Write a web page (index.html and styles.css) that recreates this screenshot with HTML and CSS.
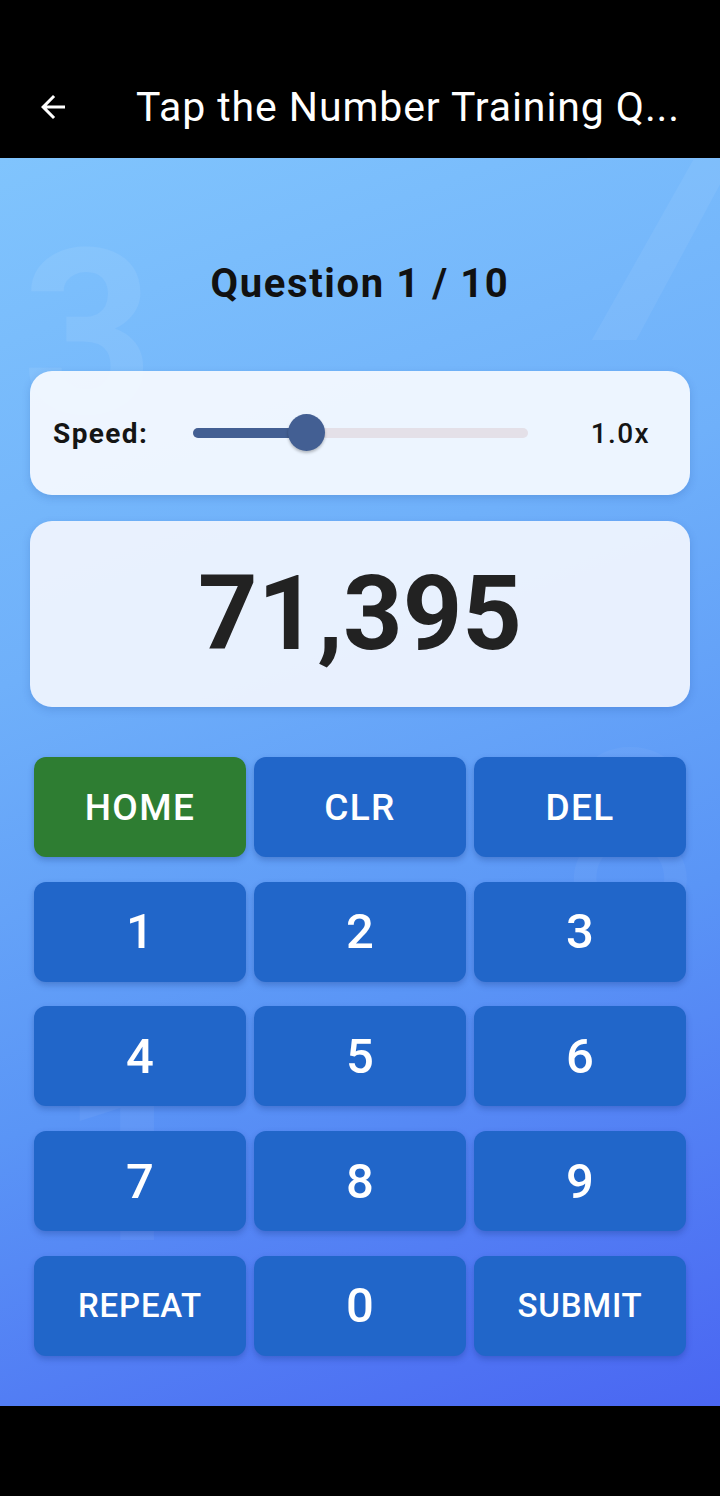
FILE: index.html
```html
<!DOCTYPE html>
<html lang="en">
<head>
<meta charset="utf-8">
<title>Tap the Number Training Quiz</title>
<link rel="stylesheet" href="styles.css">
</head>
<body>
<header class="topbar">
  <div class="appbar">
    <svg class="back" viewBox="0 0 24 24" width="36" height="36" aria-hidden="true">
      <path d="M20 11H7.83l5.59-5.59L12 4l-8 8 8 8 1.41-1.41L7.83 13H20v-2z" fill="#fff"/>
    </svg>
    <h1 class="title">Tap the Number Training Q...</h1>
  </div>
</header>
<main class="screen">
  <div class="deco deco-3" aria-hidden="true">3</div>
  <div class="deco deco-7" aria-hidden="true">7</div>
  <div class="deco deco-8" aria-hidden="true">8</div>
  <div class="deco deco-1" aria-hidden="true">1</div>

  <h2 class="question">Question 1 / 10</h2>

  <section class="card speed-card">
    <span class="speed-label">Speed:</span>
    <div class="slider">
      <div class="track"></div>
      <div class="track-active"></div>
      <div class="thumb"></div>
    </div>
    <span class="speed-value">1.0x</span>
  </section>

  <section class="card number-card">
    <span class="number">71,395</span>
  </section>

  <div class="keypad">
    <button class="key key-green key-word">HOME</button>
    <button class="key key-word">CLR</button>
    <button class="key key-word">DEL</button>
    <button class="key">1</button>
    <button class="key">2</button>
    <button class="key">3</button>
    <button class="key">4</button>
    <button class="key">5</button>
    <button class="key">6</button>
    <button class="key">7</button>
    <button class="key">8</button>
    <button class="key">9</button>
    <button class="key key-word key-small">REPEAT</button>
    <button class="key">0</button>
    <button class="key key-word key-small">SUBMIT</button>
  </div>
</main>
<footer class="navbar"></footer>
</body>
</html>
```
FILE: styles.css
```css
* { box-sizing: border-box; }

html, body {
  margin: 0;
  padding: 0;
}

body {
  width: 720px;
  height: 1496px;
  display: flex;
  flex-direction: column;
  font-family: Roboto, "Noto Sans", "Liberation Sans", sans-serif;
  background: #000;
  overflow: hidden;
}

.topbar {
  height: 158px;
  background: #000;
  padding-top: 56px;
  flex: none;
}

.appbar {
  height: 102px;
  display: flex;
  align-items: center;
  padding-left: 35px;
}

.back {
  display: block;
  flex: none;
}

.title {
  margin: 0 0 0 65px;
  color: #fff;
  font-size: 41px;
  font-weight: 400;
  white-space: nowrap;
  letter-spacing: 0.9px;
}

.screen {
  position: relative;
  flex: 1;
  overflow: hidden;
  padding: 0 30px;
  background: linear-gradient(160deg, #80c4fd 0%, #6fb0fa 35%, #5a95f6 65%, #4a66f2 100%);
}

.deco {
  position: absolute;
  color: rgba(255, 255, 255, 0.07);
  font-weight: 700;
  line-height: 1;
  pointer-events: none;
  user-select: none;
}

.deco-3 { left: 22px; top: 62px; font-size: 230px; color: rgba(255,255,255,0.08); }
.deco-7 { left: 570px; top: -70px; font-size: 300px; transform: skewX(-6deg); color: rgba(255,255,255,0.06); }
.deco-8 { left: 560px; top: 560px; font-size: 250px; font-weight: 400; color: rgba(255,255,255,0.04); }
.deco-1 { left: 60px; top: 880px; font-size: 240px; color: rgba(255,255,255,0.05); }

.question {
  position: relative;
  margin: 102px 0 0;
  height: 48px;
  line-height: 48px;
  text-align: center;
  font-size: 40px;
  font-weight: 700;
  letter-spacing: 1.6px;
  color: #111;
}

.card {
  position: relative;
  border-radius: 22px;
  box-shadow: 0 3px 8px rgba(20, 60, 140, 0.18);
}

.speed-card {
  margin-top: 63px;
  height: 124px;
  display: flex;
  align-items: center;
  padding: 0 40px 0 23px;
  background: rgba(242, 248, 255, 0.96);
}

.speed-label {
  font-size: 28px;
  font-weight: 700;
  letter-spacing: 1.4px;
  color: #151515;
}

.slider {
  position: relative;
  width: 335px;
  height: 40px;
  margin-left: 45px;
}

.track {
  position: absolute;
  left: 0;
  right: 0;
  top: 15px;
  height: 10px;
  border-radius: 5px;
  background: #e4e0e8;
}

.track-active {
  position: absolute;
  left: 0;
  width: 113px;
  top: 15px;
  height: 10px;
  border-radius: 5px;
  background: #435f93;
}

.thumb {
  position: absolute;
  left: 95px;
  top: 1px;
  width: 37px;
  height: 37px;
  border-radius: 50%;
  background: #435f93;
  box-shadow: 0 2px 3px rgba(0, 0, 0, 0.25);
}

.speed-value {
  margin-left: auto;
  font-size: 28px;
  font-weight: 500;
  letter-spacing: 1.4px;
  color: #151515;
}

.number-card {
  margin-top: 26px;
  height: 186px;
  display: flex;
  align-items: center;
  justify-content: center;
  background: rgba(236, 243, 254, 0.97);
}

.number {
  font-size: 104px;
  font-weight: 700;
  color: #222;
  line-height: 1;
  margin-top: 0;
}

.keypad {
  position: relative;
  margin-top: 50px;
  padding: 0 4px;
  display: grid;
  grid-template-columns: repeat(3, 1fr);
  grid-auto-rows: 100px;
  column-gap: 8px;
  row-gap: 24.7px;
}

.key {
  border: 0;
  margin: 0;
  padding: 0;
  border-radius: 12px;
  background: #2166c9;
  color: #fff;
  font-family: Roboto, "Noto Sans", "Liberation Sans", sans-serif;
  font-size: 49px;
  font-weight: 500;
  box-shadow: 0 3px 6px rgba(10, 40, 110, 0.28);
  display: flex;
  align-items: center;
  justify-content: center;
}

.key-word {
  font-size: 37px;
  font-weight: 500;
  letter-spacing: 1.4px;
}

.key-small {
  font-size: 33px;
  letter-spacing: 0.8px;
}

.key-green {
  background: #2e7d32;
}

.navbar {
  height: 90px;
  flex: none;
  background: #000;
}
```
